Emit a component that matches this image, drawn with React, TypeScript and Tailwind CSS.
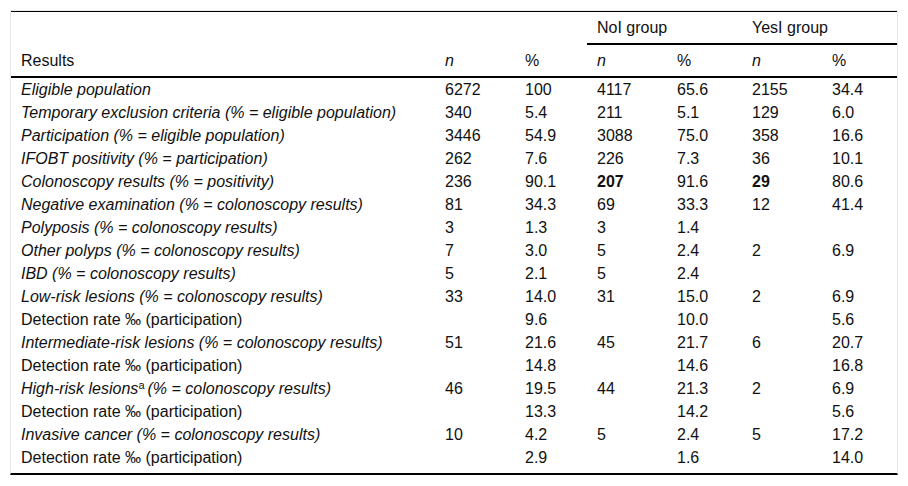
import React from "react";

type Row = {
  label: React.ReactNode;
  italic: boolean;
  cells: [string, string, string, string, string, string];
  bold?: number[];
};

const rows: Row[] = [
  { label: "Eligible population", italic: true, cells: ["6272", "100", "4117", "65.6", "2155", "34.4"] },
  { label: "Temporary exclusion criteria (% = eligible population)", italic: true, cells: ["340", "5.4", "211", "5.1", "129", "6.0"] },
  { label: "Participation (% = eligible population)", italic: true, cells: ["3446", "54.9", "3088", "75.0", "358", "16.6"] },
  { label: "IFOBT positivity (% = participation)", italic: true, cells: ["262", "7.6", "226", "7.3", "36", "10.1"] },
  { label: "Colonoscopy results (% = positivity)", italic: true, cells: ["236", "90.1", "207", "91.6", "29", "80.6"], bold: [2, 4] },
  { label: "Negative examination (% = colonoscopy results)", italic: true, cells: ["81", "34.3", "69", "33.3", "12", "41.4"] },
  { label: "Polyposis (% = colonoscopy results)", italic: true, cells: ["3", "1.3", "3", "1.4", "", ""] },
  { label: "Other polyps (% = colonoscopy results)", italic: true, cells: ["7", "3.0", "5", "2.4", "2", "6.9"] },
  { label: "IBD (% = colonoscopy results)", italic: true, cells: ["5", "2.1", "5", "2.4", "", ""] },
  { label: "Low-risk lesions (% = colonoscopy results)", italic: true, cells: ["33", "14.0", "31", "15.0", "2", "6.9"] },
  { label: "Detection rate ‰ (participation)", italic: false, cells: ["", "9.6", "", "10.0", "", "5.6"] },
  { label: "Intermediate-risk lesions (% = colonoscopy results)", italic: true, cells: ["51", "21.6", "45", "21.7", "6", "20.7"] },
  { label: "Detection rate ‰ (participation)", italic: false, cells: ["", "14.8", "", "14.6", "", "16.8"] },
  {
    label: (
      <>
        High-risk lesions
        <sup className="not-italic text-[11px] leading-none">a</sup>
        <span className="ml-[3px]">(% = colonoscopy results)</span>
      </>
    ),
    italic: true,
    cells: ["46", "19.5", "44", "21.3", "2", "6.9"],
  },
  { label: "Detection rate ‰ (participation)", italic: false, cells: ["", "13.3", "", "14.2", "", "5.6"] },
  { label: "Invasive cancer (% = colonoscopy results)", italic: true, cells: ["10", "4.2", "5", "2.4", "5", "17.2"] },
  { label: "Detection rate ‰ (participation)", italic: false, cells: ["", "2.9", "", "1.6", "", "14.0"] },
];

const App = () => {
  return (
    <div className="min-h-screen bg-white pt-[10px] pl-[10px] font-['Liberation_Sans',Arial,sans-serif] text-[16px] leading-[17px] text-[#111]">
      <div className="w-[888px] border-x border-t border-[#e8e8e8] pb-[4px] border-b-2 border-b-black">
        <table className="w-[886px] table-fixed border-collapse border-t border-black text-left">
          <colgroup>
            <col className="w-[424px]" />
            <col className="w-[80px]" />
            <col className="w-[72px]" />
            <col className="w-[80px]" />
            <col className="w-[75px]" />
            <col className="w-[80px]" />
            <col className="w-[75px]" />
          </colgroup>
          <thead>
            <tr>
              <th className="px-[10px] py-[7px] font-normal" />
              <th className="px-[10px] py-[7px] font-normal" />
              <th className="px-[10px] py-[7px] font-normal" />
              <th colSpan={2} className="border-b-2 border-black px-[10px] py-[7px] font-normal">
                NoI group
              </th>
              <th colSpan={2} className="border-b-2 border-black px-[10px] py-[7px] font-normal">
                YesI group
              </th>
            </tr>
            <tr className="border-b-2 border-black">
              <th className="px-[10px] py-[7px] font-normal">Results</th>
              <th className="px-[10px] py-[7px] font-normal italic">n</th>
              <th className="px-[10px] py-[7px] font-normal">%</th>
              <th className="px-[10px] py-[7px] font-normal italic">n</th>
              <th className="px-[10px] py-[7px] font-normal">%</th>
              <th className="px-[10px] py-[7px] font-normal italic">n</th>
              <th className="px-[10px] py-[7px] font-normal">%</th>
            </tr>
          </thead>
          <tbody>
            {rows.map((row, i) => (
              <tr key={i}>
                <td className={`px-[10px] py-[3px] whitespace-nowrap ${row.italic ? "italic" : ""}`}>
                  {row.label}
                </td>
                {row.cells.map((cell, j) => (
                  <td
                    key={j}
                    className={`px-[10px] py-[3px] ${row.bold?.includes(j) ? "font-bold" : ""}`}
                  >
                    {cell}
                  </td>
                ))}
              </tr>
            ))}
          </tbody>
        </table>
      </div>
    </div>
  );
};

export default App;
